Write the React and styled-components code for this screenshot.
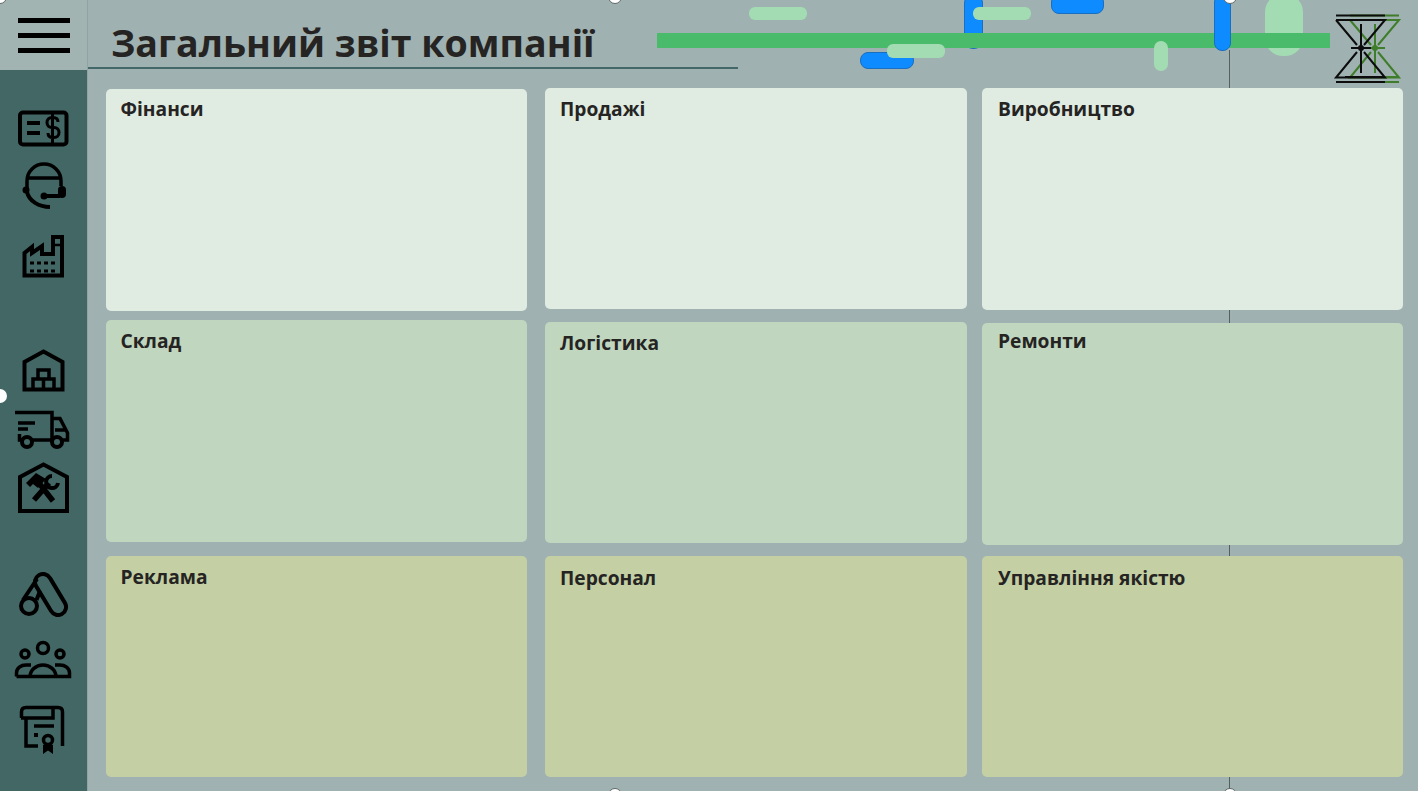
import styled, { createGlobalStyle } from "styled-components";

const GlobalStyle = createGlobalStyle`
  html, body {
    margin: 0;
    padding: 0;
    background: #9fb1b0;
  }
  * {
    box-sizing: border-box;
  }
`;

const Page = styled.div`
  position: relative;
  display: flex;
  width: 1418px;
  height: 791px;
  overflow: hidden;
  background: #9fb1b0;
  font-family: "Open Sans", "Noto Sans", sans-serif;
  color: #252423;
`;

const Sidebar = styled.aside`
  flex: none;
  display: flex;
  flex-direction: column;
  width: 88px;
  background: #426765;
  border-right: 1px solid #8fa5a3;
`;

const MenuBox = styled.div`
  flex: none;
  display: flex;
  flex-direction: column;
  gap: 10px;
  height: 70px;
  padding: 18px 0 0 18px;
  background: #a1b4b2;
`;

const MenuBar = styled.span`
  display: block;
  width: 52px;
  height: 5px;
  background: #000;
`;

const Nav = styled.nav`
  display: flex;
  flex-direction: column;
`;

const NavIcon = styled.svg`
  display: block;
  flex: none;
  margin-top: ${(p) => p.$top}px;
  margin-left: ${(p) => p.$left}px;
  fill: none;
  stroke: #000;
  stroke-width: 4;
`;

const Main = styled.main`
  flex: 1;
  display: flex;
  flex-direction: column;
`;

const Header = styled.header`
  flex: none;
  width: 650px;
  height: 69px;
  padding: 18px 0 0 23px;
  border-bottom: 2px solid #44686a;
`;

const Title = styled.h1`
  margin: 0;
  font-size: 37.6px;
  line-height: 50px;
  font-weight: 700;
  color: #252423;
`;

const Board = styled.div`
  display: flex;
  padding-left: 18px;
`;

const Column = styled.div`
  flex: none;
  display: flex;
  flex-direction: column;
  width: ${(p) => p.$width}px;
  margin-left: ${(p) => p.$left || 0}px;
`;

const tones = {
  light: "#e0ebe2",
  mid: "#c1d6be",
  olive: "#c4d0a4",
};

const Card = styled.section`
  height: ${(p) => p.$height}px;
  margin-top: ${(p) => p.$top}px;
  padding: ${(p) => p.$textTop}px 0 0 ${(p) => p.$pad}px;
  background: ${(p) => tones[p.$tone]};
  border-radius: 5px;
`;

const CardTitle = styled.h2`
  margin: 0;
  font-size: 19.2px;
  line-height: 27px;
  font-weight: 700;
  color: #252423;
`;

const GuideLine = styled.div`
  position: absolute;
  left: 1229px;
  top: 50px;
  width: 1px;
  height: 741px;
  background: #555f5f;
`;

const Overlay = styled.div`
  position: absolute;
  inset: 0;
  pointer-events: none;
`;

const CardsLayer = styled.div`
  position: relative;
`;

const pillColors = {
  blue: "#0d8bff",
  pale: "#a3dcb3",
};

const Pill = styled.div`
  position: absolute;
  left: ${(p) => p.$x}px;
  top: ${(p) => p.$y}px;
  width: ${(p) => p.$w}px;
  height: ${(p) => p.$h}px;
  border-radius: ${(p) => p.$r}px;
  background: ${(p) => pillColors[p.$color]};
  border: ${(p) => (p.$color === "blue" ? "1px solid #1a6fc0" : "none")};
`;

const GreenBar = styled.div`
  position: absolute;
  left: 657px;
  top: 33px;
  width: 673px;
  height: 15px;
  background: #4abb6a;
`;

const Logo = styled.svg`
  position: absolute;
  left: 1330px;
  top: 10px;
  fill: none;
`;

const Handle = styled.span`
  position: absolute;
  left: ${(p) => p.$x - 7}px;
  top: ${(p) => p.$y - 7}px;
  width: 14px;
  height: 14px;
  border-radius: 50%;
  background: #fff;
  border: ${(p) => (p.$plain ? "none" : "1.5px solid #5f6868")};
`;

const Hourglass = ({ dx, color, filled }) => (
  <g transform={`translate(${dx} 0)`} stroke={color} strokeWidth="2">
    <path d="M1336 15.500H1385M1336 20H1385L1364 45M1336 20L1357 45M1357 52L1336 77.500H1385L1364 52M1345 77H1385M1336 82H1385" />
    <path d="M1361 24V73M1351 48H1371" />
    <circle cx="1361" cy="48" r="2" fill={filled ? color : "none"} />
  </g>
);

const rows = [
  { width: 421, left: 0, pad: 14.5, cards: [
    { title: "Фінанси", tone: "light", top: 20, height: 222, textTop: 6 },
    { title: "Склад", tone: "mid", top: 9, height: 222, textTop: 7 },
    { title: "Реклама", tone: "olive", top: 14, height: 221, textTop: 7 },
  ] },
  { width: 422, left: 18, pad: 15, cards: [
    { title: "Продажі", tone: "light", top: 19, height: 221, textTop: 7 },
    { title: "Логістика", tone: "mid", top: 13, height: 221, textTop: 7 },
    { title: "Персонал", tone: "olive", top: 13, height: 221, textTop: 8 },
  ] },
  { width: 421, left: 15, pad: 16, cards: [
    { title: "Виробництво", tone: "light", top: 19, height: 222, textTop: 7 },
    { title: "Ремонти", tone: "mid", top: 13, height: 222, textTop: 4 },
    { title: "Управління якістю", tone: "olive", top: 11, height: 221, textTop: 8 },
  ] },
];

export default function App() {
  return (
    <Page>
      <GlobalStyle />
      <Sidebar>
        <MenuBox>
          <MenuBar />
          <MenuBar />
          <MenuBar />
        </MenuBox>
        <Nav>
          {/* finance */}
          <NavIcon $top={39} $left={16} width="56" height="40" viewBox="16 109 56 40">
            <rect x="20" y="112.500" width="46.500" height="32" rx="3" />
            <path d="M27 123H40M27 133H40" />
            <path strokeWidth="3" d="M52.500 111V146M58 122c0-3-2-4.500-5-4.500h-1c-3 0-5 2-5 5s2 5 5 5h2c3 0 5 2 5 5s-2 5-5 5h-1c-3 0-5-1.500-5-4.500" />
          </NavIcon>
          {/* sales */}
          <NavIcon $top={12} $left={21} width="48" height="48" viewBox="21 161 48 48">
            <path d="M27 188V181a17 17 0 0 1 34 0V186M27 178H61" strokeWidth="3.500" />
            <circle cx="26" cy="190" r="3.500" fill="#000" stroke="none" />
            <path d="M27 192c2 9 12 15 23 15" />
            <path d="M43 196H60" strokeWidth="4" />
            <circle cx="44" cy="196" r="3.500" fill="#000" stroke="none" />
            <rect x="58" y="186" width="8" height="12" rx="4" fill="#000" stroke="none" />
          </NavIcon>
          {/* production */}
          <NavIcon $top={24} $left={21} width="46" height="48" viewBox="21 233 46 48">
            <path d="M24.500 275.500V253L32 247V253L42 246V254H53V237H62V275.500Z" />
            <path d="M53 245H62" strokeWidth="2.500" />
            <path d="M30 263H57M30 271H57" strokeWidth="3" strokeDasharray="4 3" />
          </NavIcon>
          {/* warehouse */}
          <NavIcon $top={68} $left={21} width="46" height="44" viewBox="21 350 46 44">
            <path d="M24.500 390.500V363L43.500 352.500L62.500 363V390.500Z" />
            <path strokeWidth="3.500" d="M38 380V371H49V380M33 391V380H54V391M43.500 380V391" />
          </NavIcon>
          {/* logistics */}
          <NavIcon $top={16} $left={14} width="57" height="42" viewBox="14 410 57 42">
            <path strokeWidth="3.500" d="M15 413.500H52V441M18 424H35M18 430H28M19.500 435V441H22M32 441H52" />
            <path strokeWidth="3.500" d="M52 419.500H60L67.500 434V441H62M55 431H66" />
            <circle cx="27" cy="443" r="5" />
            <circle cx="57" cy="443" r="5" />
          </NavIcon>
          {/* repairs */}
          <NavIcon $top={11} $left={17} width="53" height="53" viewBox="17 463 53 53">
            <path d="M20 512V478L43.500 465.500L67 478V512Z" />
            <path strokeWidth="5.500" d="M39 484L53 502M49 484L34 501" />
            <path fill="#000" stroke="none" d="M26 484L36 474L46 480L38 489L33 485L30 488Z" />
            <path strokeWidth="4" d="M52 477A6 6 0 1 0 58 484" />
          </NavIcon>
          {/* ads */}
          <NavIcon $top={57} $left={18} width="50" height="45" viewBox="18 572 50 45">
            <path d="M49.900 577.900L64.900 602.900A8 8 0 0 1 51.100 611.100L36.100 586.100A8 8 0 0 1 49.900 577.900Z" />
            <path d="M37 579L23 600M40 591L36.500 600" />
            <circle cx="29" cy="606" r="8" />
          </NavIcon>
          {/* staff */}
          <NavIcon $top={23} $left={14} width="58" height="39" viewBox="14 640 58 39">
            <circle cx="43" cy="648" r="5.500" strokeWidth="3.500" />
            <circle cx="25" cy="654" r="4" strokeWidth="3.500" />
            <circle cx="60" cy="654" r="4" strokeWidth="3.500" />
            <path strokeWidth="3.500" d="M30 677C30 670 36 665 43 665S56 670 56 677" />
            <path strokeWidth="3.500" d="M16.500 676.500V673C16.500 668 21 665 26 665H31M55 665H60C65 665 69.500 668 69.500 673V676.500H16.500" />
          </NavIcon>
          {/* quality */}
          <NavIcon $top={26} $left={18} width="48" height="51" viewBox="18 704 48 51">
            <path strokeWidth="3.500" d="M21.500 717V711C21.500 708 23.500 706.500 26 706.500H58C60.500 706.500 62.500 708 62.500 711V745M21 717H53V707M26 717V745H38" />
            <path strokeWidth="3.500" d="M34 725H54" />
            <path fill="#000" stroke="none" d="M34 732h4v4h-4z" />
            <circle cx="48" cy="739" r="4.500" strokeWidth="3.500" />
            <path fill="#000" stroke="none" d="M43 744H53V753L48 749.500L43 753Z" />
          </NavIcon>
        </Nav>
      </Sidebar>
      <GuideLine />
      <Main>
        <Header>
          <Title>Загальний звіт компанії</Title>
        </Header>
        <CardsLayer>
          <Board>
            {rows.map((col) => (
              <Column key={col.cards[0].title} $width={col.width} $left={col.left}>
                {col.cards.map((c) => (
                  <Card key={c.title} $tone={c.tone} $top={c.top} $height={c.height} $pad={col.pad} $textTop={c.textTop}>
                    <CardTitle>{c.title}</CardTitle>
                  </Card>
                ))}
              </Column>
            ))}
          </Board>
        </CardsLayer>
      </Main>
      <Overlay>
        <Pill $color="blue" $x={964} $y={-6} $w={19} $h={55} $r={9} />
        <Pill $color="pale" $x={1265} $y={-6} $w={38} $h={62} $r={18} />
        <GreenBar />
        <Pill $color="pale" $x={1154} $y={41} $w={14} $h={30} $r={7} />
        <Pill $color="blue" $x={1214} $y={-6} $w={17} $h={57} $r={8} />
        <Pill $color="blue" $x={860} $y={52} $w={54} $h={17} $r={8} />
        <Pill $color="pale" $x={887} $y={44} $w={58} $h={14} $r={6} />
        <Pill $color="pale" $x={973} $y={7} $w={58} $h={13} $r={6} />
        <Pill $color="pale" $x={749} $y={7} $w={58} $h={13} $r={6} />
        <Pill $color="blue" $x={1051} $y={-6} $w={53} $h={20} $r={8} />
        <Logo width="75" height="80" viewBox="1330 10 75 80">
          <Hourglass dx={14} color="#3f7d2a" filled />
          <Hourglass dx={0} color="#0c0c0c" />
        </Logo>
        <Handle $x={0} $y={-3} />
        <Handle $x={615} $y={-3} />
        <Handle $x={1230} $y={-3} />
        <Handle $x={0} $y={396} $plain />
        <Handle $x={615} $y={795} />
        <Handle $x={1230} $y={795} />
      </Overlay>
    </Page>
  );
}
